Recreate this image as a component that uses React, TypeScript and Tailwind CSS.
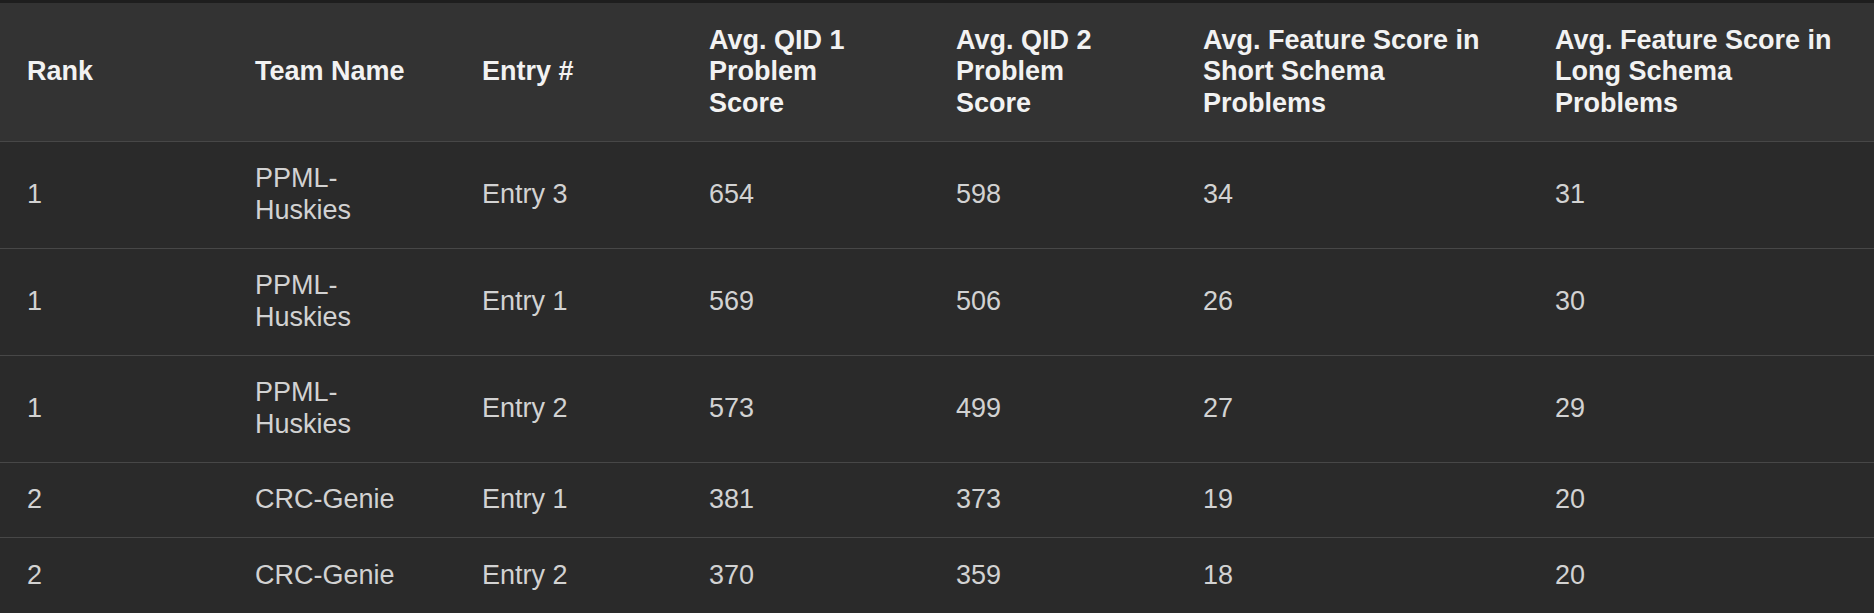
const columns = [
  { lines: ['Rank'], width: 'w-[228px]' },
  { lines: ['Team Name'], width: 'w-[227px]' },
  { lines: ['Entry #'], width: 'w-[227px]' },
  { lines: ['Avg. QID 1', 'Problem', 'Score'], width: 'w-[247px]' },
  { lines: ['Avg. QID 2', 'Problem', 'Score'], width: 'w-[247px]' },
  { lines: ['Avg. Feature Score in', 'Short Schema', 'Problems'], width: 'w-[352px]' },
  { lines: ['Avg. Feature Score in', 'Long Schema', 'Problems'], width: 'w-[346px]' },
]

const rows = [
  ['1', 'PPML-Huskies', 'Entry 3', '654', '598', '34', '31'],
  ['1', 'PPML-Huskies', 'Entry 1', '569', '506', '26', '30'],
  ['1', 'PPML-Huskies', 'Entry 2', '573', '499', '27', '29'],
  ['2', 'CRC-Genie', 'Entry 1', '381', '373', '19', '20'],
  ['2', 'CRC-Genie', 'Entry 2', '370', '359', '18', '20'],
]

export default function App() {
  return (
    <div className="min-h-screen bg-[#2a2a2a] border-t-[3px] border-[#1e1e1e] font-['Liberation_Sans',Arial,sans-serif] text-[27px] leading-[31.5px]">
      <table className="w-full table-fixed border-collapse">
        <colgroup>
          {columns.map((c, i) => (
            <col key={i} className={c.width} />
          ))}
        </colgroup>
        <thead>
          <tr className="bg-[#333333] border-b border-[#474747]">
            {columns.map((c, i) => (
              <th
                key={i}
                className="text-left align-middle font-bold text-[#f2f2f2] px-[27px] py-[21.5px]"
              >
                {c.lines.map((l, k) => (
                  <span key={k} className="block whitespace-nowrap">
                    {l}
                  </span>
                ))}
              </th>
            ))}
          </tr>
        </thead>
        <tbody>
          {rows.map((r, i) => (
            <tr key={i} className="bg-[#2a2a2a] border-b border-[#474747]">
              {r.map((cell, j) => (
                <td
                  key={j}
                  className="align-middle text-[#d2d2d2] px-[27px] py-[21.5px]"
                >
                  {cell}
                </td>
              ))}
            </tr>
          ))}
        </tbody>
      </table>
    </div>
  )
}
